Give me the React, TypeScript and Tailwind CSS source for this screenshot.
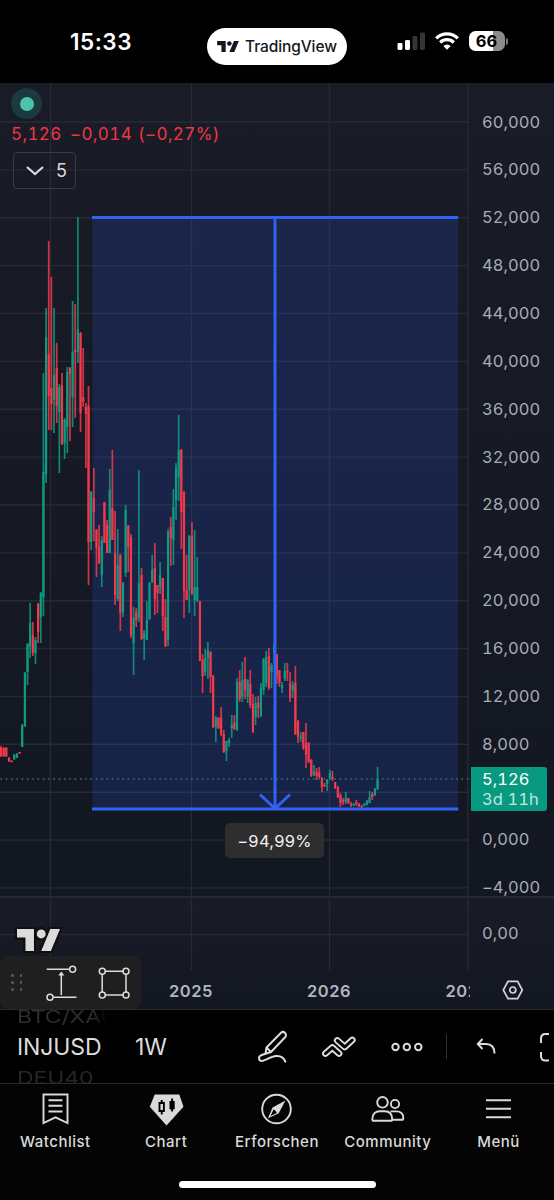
import React from 'react';

type Candle = [dir: 0 | 1, high: number, top: number, bottom: number, low: number];

const UP = '#0f9b83';
const DOWN = '#f23a4b';
const BLUE = '#2f62f5';

// weekly bars, 0 = down, 1 = up, values in chart space
const CANDLES: Candle[] = [
    [0, 746, 748, 756, 757], [0, 747, 748, 756, 757], [0, 747, 748, 756, 757], [0, 757, 758, 761, 762], [0, 760, 761, 762, 762],
    [1, 754, 755, 759, 760], [1, 753, 754, 758, 758], [0, 752, 752, 753, 754], [1, 724, 725, 747, 747], [1, 672, 673, 726, 727],
    [1, 643, 644, 672, 685], [1, 603, 623, 647, 658], [0, 622, 635, 653, 656], [1, 637, 640, 653, 664], [0, 603, 604, 632, 643],
    [1, 592, 593, 617, 643], [1, 373, 472, 597, 616], [1, 308, 337, 474, 483], [0, 241, 354, 396, 430], [0, 277, 388, 404, 430],
    [1, 308, 375, 400, 433], [0, 343, 368, 406, 423], [1, 384, 387, 412, 473], [0, 373, 385, 444, 445], [1, 418, 420, 443, 459],
    [1, 367, 372, 427, 453], [0, 367, 368, 374, 441], [1, 301, 352, 397, 427], [0, 304, 350, 352, 418], [1, 217, 329, 352, 363],
    [0, 332, 333, 413, 432], [0, 348, 397, 402, 407], [0, 403, 407, 414, 468], [0, 386, 406, 542, 585], [1, 491, 492, 542, 550],
    [0, 468, 498, 512, 541], [0, 529, 530, 548, 577], [0, 525, 547, 563, 564], [1, 536, 540, 575, 587], [0, 502, 502, 543, 543],
    [0, 520, 525, 553, 553], [1, 469, 490, 553, 553], [0, 450, 508, 540, 540], [0, 511, 553, 595, 605], [1, 529, 565, 599, 601],
    [0, 554, 555, 613, 631], [1, 582, 583, 612, 617], [1, 505, 510, 573, 577], [0, 525, 526, 547, 572], [0, 534, 537, 635, 638],
    [1, 607, 618, 643, 675], [0, 608, 612, 620, 627], [1, 470, 583, 618, 622], [0, 568, 575, 639, 640], [1, 630, 633, 639, 660],
    [1, 601, 620, 640, 640], [1, 582, 583, 619, 620], [1, 555, 570, 582, 583], [0, 543, 568, 599, 615], [0, 585, 585, 593, 613],
    [1, 562, 575, 587, 594], [0, 578, 578, 616, 631], [0, 599, 617, 646, 647], [1, 529, 532, 640, 646], [0, 517, 527, 538, 566],
    [1, 489, 507, 540, 565], [1, 463, 468, 500, 520], [1, 415, 450, 477, 501], [0, 449, 450, 512, 549], [0, 491, 492, 591, 618],
    [0, 555, 590, 600, 600], [1, 535, 536, 590, 613], [0, 522, 536, 594, 595], [1, 530, 587, 600, 616], [1, 557, 587, 601, 602],
    [0, 601, 601, 661, 661], [0, 654, 660, 676, 693], [1, 649, 658, 672, 676], [1, 642, 650, 658, 679], [0, 651, 652, 677, 693],
    [0, 675, 676, 727, 728], [1, 716, 718, 727, 742], [0, 717, 718, 728, 729], [0, 707, 718, 734, 736], [0, 730, 734, 752, 753],
    [1, 741, 741, 751, 761], [1, 738, 740, 743, 747], [1, 715, 725, 728, 738], [0, 715, 723, 729, 730], [1, 678, 682, 730, 731],
    [0, 670, 682, 699, 702], [1, 662, 680, 697, 702], [0, 657, 679, 690, 699], [1, 679, 680, 697, 703], [0, 670, 684, 705, 708],
    [0, 694, 704, 732, 733], [1, 697, 703, 717, 725], [0, 696, 703, 708, 718], [1, 683, 688, 716, 717], [1, 658, 659, 690, 695],
    [1, 651, 657, 683, 687], [0, 648, 656, 688, 690], [1, 663, 665, 672, 688], [1, 643, 646, 653, 663], [0, 654, 654, 677, 684],
    [0, 670, 670, 683, 687], [1, 682, 685, 688, 693], [1, 663, 671, 679, 681], [0, 663, 671, 672, 681], [0, 672, 683, 698, 702],
    [1, 681, 685, 690, 698], [0, 666, 683, 734, 735], [0, 720, 721, 737, 743], [1, 732, 737, 738, 742], [0, 732, 732, 748, 750],
    [0, 723, 743, 755, 768], [0, 742, 743, 762, 763], [0, 759, 760, 776, 777], [1, 765, 771, 775, 776], [0, 768, 772, 776, 780],
    [0, 767, 773, 777, 778], [0, 777, 778, 787, 792], [0, 783, 785, 786, 787], [1, 779, 780, 784, 791], [1, 770, 773, 778, 780],
    [0, 771, 777, 779, 781], [0, 782, 782, 788, 789], [0, 786, 787, 797, 798], [0, 793, 795, 803, 807], [0, 798, 800, 802, 805],
    [1, 792, 798, 802, 804], [0, 798, 798, 803, 804], [0, 802, 804, 805, 807], [1, 803, 804, 805, 806], [0, 800, 802, 804, 806],
    [0, 803, 804, 806, 807], [0, 805, 806, 807, 808], [1, 803, 804, 806, 806], [1, 800, 801, 805, 805], [1, 791, 797, 803, 803],
    [0, 792, 794, 797, 800], [1, 788, 789, 795, 796], [1, 767, 779, 789, 790],
];

// the empty slot sits behind the last price badge
const PRICES = [
    '60,000', '56,000', '52,000', '48,000', '44,000', '40,000', '36,000', '32,000', '28,000',
    '24,000', '20,000', '16,000', '12,000', '8,000', '', '0,000', '−4,000',
];

const GRID_X = [50.5, 191.5, 329.5, 467.8];

function TVMark({ className, outline }: { className?: string; outline?: string }) {
    return (
        <svg viewBox="0 4 35.5 18" className={className} fill="currentColor" overflow="visible">
            {outline && (
                <path d="M14 22H7V11H0V4h14v18zM28 22h-8l7.5-18h8L28 22zM16 8a4 4 0 1 0 8 0a4 4 0 1 0-8 0" fill={outline} stroke={outline} strokeWidth="3.5" />
            )}
            <path d="M14 22H7V11H0V4h14v18zM28 22h-8l7.5-18h8L28 22z" />
            <circle cx="20" cy="8" r="3.7" />
        </svg>
    );
}

function StatusBar() {
    return (
        <header className="flex h-[83px] items-start bg-black text-white">
            <div className="ml-[70px] mt-[27px] w-[137px] text-[22.5px] font-semibold leading-[30px] tracking-[0.5px]">15:33</div>
            <div className="mt-[28px] flex h-[37px] w-[140px] items-center rounded-full bg-white pl-[10px] text-[#131722]">
                <TVMark className="h-[11px] w-[22px]" />
                <span className="ml-[6px] whitespace-nowrap text-[15.5px] font-medium tracking-[-0.1px]">TradingView</span>
            </div>
            <svg className="ml-[50px] mt-[32px] h-[18px] w-[29px]" viewBox="0 0 29 18">
                <rect x="0.5" y="11" width="5" height="7" rx="1.4" fill="#fff" />
                <rect x="8" y="8" width="5" height="10" rx="1.4" fill="#fff" />
                <rect x="15.5" y="4" width="5" height="14" rx="1.4" fill="#343434" />
                <rect x="23" y="0.5" width="5" height="17.5" rx="1.4" fill="#343434" />
            </svg>
            <svg className="ml-[9px] mt-[32px] h-[18px] w-[24px]" viewBox="0 0 24 18" fill="none" stroke="#fff" strokeWidth="3.2">
                <path d="M1.2 6.3a15.2 15.2 0 0 1 21.6 0" />
                <path d="M5.2 10.5a9.6 9.6 0 0 1 13.6 0" />
                <path d="M12 17.8L8.3 14a5.2 5.2 0 0 1 7.4 0z" fill="#fff" stroke="none" />
            </svg>
            <div className="ml-[10px] mt-[31px] flex items-center">
                <div className="flex h-[20px] w-[36px] items-center justify-center rounded-[6.5px] bg-linear-to-r from-white from-66% to-[#8b8b8b] to-66% pr-[1px] text-[16.5px] font-bold leading-none text-black">
                    66
                </div>
                <div className="ml-[1px] h-[7px] w-[2px] rounded-r-full bg-[#777]" />
            </div>
        </header>
    );
}

function ChartCanvas() {
    return (
        <svg className="block h-[927px] w-[470px]" viewBox="0 83 470 927">
            <g stroke="#262a34" strokeWidth="1.4">
                {PRICES.map((p, i) => (
                    <line key={i} x1="0" x2="469" y1={122 + i * 47.87} y2={122 + i * 47.87} />
                ))}
                <line x1="0" x2="469" y1="934.5" y2="934.5" />
                {GRID_X.map((x) => (
                    <line key={x} x1={x} x2={x} y1="83" y2="970" />
                ))}
            </g>

            <rect x="92.5" y="217.5" width="365.5" height="591" fill="#2962ff" opacity="0.165" />

            <line x1="0.5" x2="470" y1="779" y2="779" stroke="#1f8d80" strokeWidth="1.3" strokeDasharray="1.4 3.9" />
            {CANDLES.map(([dir, high, top, bottom, low], i) => {
                const x = 1 + i * 2.652;
                const color = dir ? UP : DOWN;
                return (
                    <g key={i} fill={color}>
                        <rect x={x - 0.85} y={high} width="1.7" height={Math.max(low - high, 1)} opacity="0.85" />
                        <rect x={x - 1.1} y={top} width="2.2" height={Math.max(bottom - top, 1.3)} />
                    </g>
                );
            })}

            {/* price range measure */}
            <g stroke={BLUE} strokeWidth="3" fill="none">
                <path d="M92 217.5H458.3M92 809H458.3M275 217.5V808M260 794.5l15 14 15-14" />
            </g>
        </svg>
    );
}

function DrawingToolbar() {
    return (
        <div className="absolute left-0 top-[873px] flex h-[53px] w-[141px] items-center rounded-[8px] bg-[#1f1f1f] text-[#dcdcdc]">
            <div className="ml-[11px] grid grid-cols-2 gap-x-[6px] gap-y-[4.5px]">
                {[0, 1, 2, 3, 4, 5].map((d) => (
                    <span key={d} className="size-[2.5px] rounded-full bg-[#5c5c5c]" />
                ))}
            </div>
            <svg className="ml-[24px] mt-[1px] h-[36px] w-[31px]" viewBox="0 0 31 36" fill="none" stroke="currentColor" strokeWidth="1.5">
                <path d="M0.7 4.2H23.5M7.3 32.2H30.5M15.3 30V9" />
                <circle cx="26.6" cy="4.2" r="3" />
                <circle cx="4" cy="32.2" r="3" />
                <path d="M15.3 6.5l3 4h-6z" fill="currentColor" stroke="none" />
            </svg>
            <svg className="ml-[21px] mt-[1px] h-[32px] w-[32px]" viewBox="0 0 32 32" fill="none" stroke="currentColor" strokeWidth="1.5">
                <path d="M7.3 4.2h18M7.3 28h18M4.2 7.3v18M28 7.3v18" />
                <circle cx="4.3" cy="4.3" r="3" />
                <circle cx="28" cy="4.3" r="3" />
                <circle cx="4.3" cy="28" r="3" />
                <circle cx="28" cy="28" r="3" />
            </svg>
        </div>
    );
}

function ChartPanel() {
    return (
        <main className="relative flex h-[926px] overflow-hidden bg-linear-to-b from-[#191c27] to-[#131722] to-86%">
            <div className="absolute inset-x-0 top-[813px] h-[113px] border-t-2 border-[#262933] bg-linear-to-b from-[#191c27] to-[#131722]" />

            <div className="relative w-[470px]">
                <ChartCanvas />

                {/* legend */}
                <div className="absolute left-[11px] top-[5px]">
                    <div className="flex size-[31px] items-center justify-center rounded-full bg-[#1c3a3e]">
                        <span className="size-[14px] rounded-full bg-[#4cc4ad]" />
                    </div>
                    <div className="flex whitespace-nowrap text-[17px] leading-[31px] tracking-[0.4px] tabular-nums text-[#f23645]">
                        <span className="w-[59px]">5,126</span>
                        <span className="w-[68px]">−0,014</span>
                        <span>(−0,27%)</span>
                    </div>
                    <div className="ml-[2px] mt-[2px] flex h-[37px] w-[63px] items-center rounded-[4px] border-[1.5px] border-[#3a3b40] text-[18px] text-[#dadada]">
                        <svg className="ml-[12px] h-[10px] w-[18px]" viewBox="0 0 18 10" fill="none" stroke="currentColor" strokeWidth="2.2">
                            <path d="M1 1l8 7 8-7" />
                        </svg>
                        <span className="ml-[12px]">5</span>
                    </div>
                </div>

                <div className="absolute left-[225px] top-[740px] flex h-[35px] w-[99px] items-center justify-center rounded-[5px] bg-[#2e2e2e] pt-[2px] text-[16.5px] tracking-[0.3px] text-[#f0f0f0]">
                    −94,99%
                </div>

                <TVMark className="absolute left-[17px] top-[846px] h-[22px] w-[43px] text-[#dbdbdb]" outline="#0f0f0f" />

                {/* time axis */}
                <div className="absolute inset-x-0 top-[893px] flex h-[30px] overflow-hidden pl-[122px] text-[16.5px] font-semibold leading-[30px] tracking-[0.5px] text-[#b2b5be]">
                    <span className="w-[138px] shrink-0 text-center">2025</span>
                    <span className="w-[138px] shrink-0 text-center">2026</span>
                    <span className="w-[138px] shrink-0 text-center">2027</span>
                </div>

                <DrawingToolbar />
            </div>

            {/* price axis */}
            <div className="relative w-[84px] pl-[12px] pt-[15px] text-[16.5px] tracking-[0.05px] tabular-nums text-[#a9acb5]">
                {PRICES.map((p, i) => (
                    <div key={i} className="flex h-[47.87px] items-center">{p}</div>
                ))}
                <div className="mt-[6px] leading-[30px]">0,00</div>
                <div className="absolute left-[1px] top-[684px] flex h-[44px] w-[76px] flex-col justify-center rounded-r-[3px] bg-[#089981] pl-[11px] leading-[20px] text-white">
                    <span>5,126</span>
                    <span className="text-[#bfe8df]">3d 11h</span>
                </div>
                <svg className="absolute left-[32px] top-[897px] h-[20px] w-[22px]" viewBox="0 0 22 20" fill="none" stroke="#d1d4dc" strokeWidth="1.7">
                    <path d="M6 1.3h9.6L20.3 10l-4.7 8.7H6L1.3 10z" />
                    <circle cx="10.8" cy="10" r="3" />
                </svg>
            </div>
        </main>
    );
}

function SymbolBar() {
    return (
        <div className="flex h-[75px] items-center overflow-hidden border-y-[1.5px] border-[#2a2a2a] bg-black text-[#dcdcdc]">
            {/* symbol wheel */}
            <div className="ml-[17px] mt-[2px] flex w-[118px] flex-col text-[23px] leading-[31px] tracking-[-0.1px]">
                <div className="h-[30px] w-[96px] origin-left scale-y-75 bg-linear-to-r from-[#2e2e2e] from-80% to-black bg-clip-text text-transparent">BTC/XAU</div>
                <div>INJUSD</div>
                <div className="h-[30px] scale-y-75 text-[#262626]">DEU40</div>
            </div>
            <div className="mt-[2px] w-[122px] text-[23px]">1W</div>
            <svg className="h-[34px] w-[30px] shrink-0" viewBox="0 0 30 34" fill="none" stroke="currentColor" strokeWidth="2" strokeLinejoin="round" strokeLinecap="round">
                <path d="M9.5 17.5L23.8 3a3 3 0 0 1 4.3 4.3L14 22l-5.5 1.7zM9.5 17.5l4.5 4.5" />
                <path d="M8.5 23.7L4 25.3c-2.8 1.2-2.6 5.2.5 5.7 3.5.5 8.5-4.6 14.5-5 5-.4 8 2.3 9.3 5.7" />
            </svg>
            <svg className="ml-[35px] h-[22px] w-[34px] shrink-0" viewBox="0 0 34 22" fill="none" strokeLinecap="round" strokeLinejoin="round">
                <path d="M3.5 17.5L10.3 11.5 17 17.5M15.3 4.5l7.4 6.5 7.6-7" stroke="currentColor" strokeWidth="6.8" />
                <path d="M3.5 17.5L10.3 11.5 17 17.5M15.3 4.5l7.4 6.5 7.6-7" stroke="#000" strokeWidth="3" />
            </svg>
            <svg className="ml-[35px] h-[10px] w-[32px] shrink-0" viewBox="0 0 32 10" fill="none" stroke="currentColor" strokeWidth="2">
                <circle cx="4.5" cy="5" r="3.2" />
                <circle cx="15.8" cy="5" r="3.2" />
                <circle cx="27.3" cy="5" r="3.2" />
            </svg>
            <div className="ml-[23px] h-[25px] w-px shrink-0 bg-[#333]" />
            <svg className="ml-[29px] h-[18px] w-[20px] shrink-0" viewBox="0 0 20 18" fill="none" stroke="currentColor" strokeWidth="2">
                <path d="M6.5 1L1.8 6l4.7 5M2 6h8c5.5 0 8.5 3.5 8.5 9.5" />
            </svg>
            <svg className="ml-[43px] h-[30px] w-[15px] shrink-0" viewBox="0 0 15 30" fill="none" stroke="currentColor" strokeWidth="2">
                <path d="M10 2H6.500C3.5 2 2 3.5 2 6.5V11M2 20v4c0 3 1.5 4.5 4.5 4.5H10" />
            </svg>
        </div>
    );
}

const TABS = [
    {
        name: 'Watchlist',
        icon: <path d="M5.5 2.5h24v28.5l-12-5.6-12 5.6zM10.5 8.2h14M10.5 13.8h14M10.5 19.5h14" />,
    },
    {
        name: 'Chart',
        icon: (
            <>
                <path d="M5.7 2.5h24.6l4.2 12.2L17.5 33.5.8 14.7z" fill="currentColor" stroke="none" />
                <path d="M10.5 11h4.4v8h-4.4zM12.7 8v3M12.7 19v3.5" stroke="#000" />
                <path d="M20.5 9h5.2v8.3h-5.2z" fill="#000" stroke="none" />
                <path d="M23.1 6.5v13" stroke="#000" />
            </>
        ),
    },
    {
        name: 'Erforschen',
        icon: (
            <>
                <circle cx="17.5" cy="17" r="14.3" />
                <path d="M26.5 8.5L13.5 15.5 9 26.2l10.5-4.7z" fill="currentColor" stroke="none" />
                <path d="M14.5 17.5L11.5 24l6.3-3-1.3-2.3z" fill="#000" stroke="none" />
            </>
        ),
    },
    {
        name: 'Community',
        icon: (
            <>
                <circle cx="12.5" cy="10.3" r="5.3" />
                <circle cx="25" cy="12" r="4.1" />
                <path d="M2.3 27.2c0-5.2 3.3-8 7.5-8h4.8c4.5 0 7.6 2.8 7.6 8 0 1-.6 1.6-1.6 1.6H3.9c-1 0-1.6-.6-1.6-1.6z" />
                <path d="M20.5 19.4h5.8c4.3 0 7 2.6 7 6.8 0 1-.6 1.6-1.6 1.6h-9.8" />
            </>
        ),
    },
    { name: 'Menü', icon: <path d="M5 8.3h25M5 16.8h25M5 25.3h25" /> },
];

function TabBar() {
    return (
        <nav className="h-[116px] bg-[#040404]">
            <div className="grid grid-cols-5 text-[#dadada]">
                {TABS.map((tab) => (
                    <div key={tab.name} className="flex flex-col items-center pt-[8px]">
                        <svg className="size-[35px]" viewBox="0 0 35 35" fill="none" stroke="currentColor" strokeWidth="1.9">
                            {tab.icon}
                        </svg>
                        <span className="mt-[4px] text-[15px] font-medium leading-[21px] tracking-[0.5px]">{tab.name}</span>
                    </div>
                ))}
            </div>
            <div className="mx-auto mt-[29px] h-[7px] w-[197px] rounded-full bg-white" />
        </nav>
    );
}

export default function App() {
    return (
        <div className="h-[1200px] w-[554px] overflow-hidden bg-black font-['Inter','Liberation_Sans',sans-serif]">
            <StatusBar />
            <ChartPanel />
            <SymbolBar />
            <TabBar />
        </div>
    );
}
